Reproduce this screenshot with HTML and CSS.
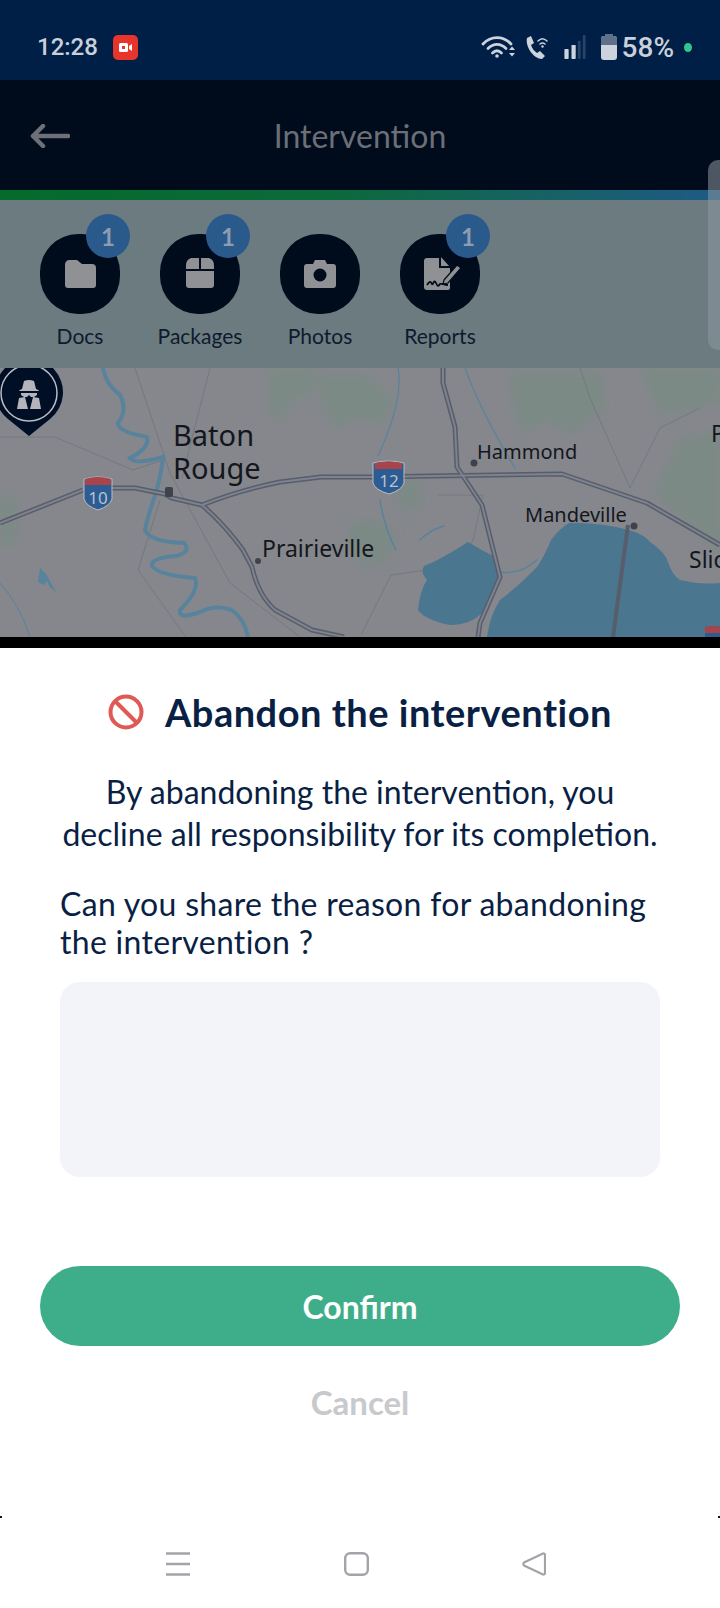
FILE: index.html
```html
<!DOCTYPE html>
<html lang="en">
  <head>
    <meta charset="UTF-8" />
    <meta name="viewport" content="width=device-width, initial-scale=1.0"/>
    <title>Intervention</title>
    <link rel="stylesheet" href="styles.css">
  </head>
  <body>
    <div class="status-bar">
      <span class="clock">12:28</span>
      <svg class="rec-icon" viewBox="0 0 25 25">
        <rect width="25" height="25" rx="5" fill="#e8352c"/>
        <rect x="6" y="8" width="9" height="9" rx="1.5" fill="#fff"/>
        <path d="M16 11l3-2v7l-3-2z" fill="#fff"/>
        <rect x="9" y="11" width="3" height="3" fill="#e8352c"/>
      </svg>
      <div class="status-right">
        <svg class="wifi-icon" viewBox="0 0 34 24" fill="none" stroke="#ccd3dd" stroke-width="2.8" stroke-linecap="round">
          <path d="M2 9c8-8.500 20-8.500 28 0"/>
          <path d="M7 13.500c5.500-5.500 12.500-5.500 18 0"/>
          <path d="M11.500 18c3-3 6-3 9 0"/>
          <circle cx="16" cy="21" r="1.800" fill="#ccd3dd" stroke="none"/>
          <path d="M28 15l3-3.500 3 3.500zM28 18l3 3.500 3-3.500z" fill="#ccd3dd" stroke="none"/>
        </svg>
        <svg class="call-icon" viewBox="0 0 24 24">
          <path d="M2 3l4-2 3 7-3 2c1 3 3 6 6 8l3-2 5 5-3 3C9 24 0 12 2 3z" fill="#ccd3dd"/>
          <path d="M13 6c3-3 6-3 9 0M15 9c2-1.500 3-1.500 5 0" fill="none" stroke="#ccd3dd" stroke-width="1.500" stroke-linecap="round"/>
          <circle cx="17.500" cy="11.500" r="1.200" fill="#ccd3dd"/>
        </svg>
        <svg class="signal-icon" viewBox="0 0 30 34">
          <rect x="0" y="20" width="6" height="14" rx="1" fill="#ccd3dd"/>
          <rect x="10" y="14" width="6" height="20" rx="1" fill="#ccd3dd"/>
          <rect x="19" y="8" width="4" height="26" rx="1" fill="#2a4263"/>
          <rect x="26" y="0" width="4" height="34" rx="1" fill="#2a4263"/>
        </svg>
        <svg class="battery-icon" viewBox="0 0 16 26">
          <rect x="4" y="0" width="8" height="3" fill="#5d7188"/>
          <rect x="0" y="2" width="16" height="24" rx="3" fill="#ccd3dd"/>
          <path d="M0 11V5a3 3 0 0 1 3-3h10a3 3 0 0 1 3 3v6z" fill="#5d7188"/>
        </svg>
        <span class="battery-text">58%</span>
        <span class="green-dot"></span>
      </div>
    </div>

    <header class="top-bar">
      <svg class="back-arrow" viewBox="0 0 40 24" fill="none" stroke="#6d7077" stroke-width="4.500" stroke-linecap="round" stroke-linejoin="round">
        <path d="M38 12H3M13 2L3 12l10 10"/>
      </svg>
      <h1>Intervention</h1>
    </header>
    <div class="progress-strip"></div>

    <div class="actions">
      <div class="action">
        <div class="round-btn">
          <svg viewBox="0 0 80 80"><path d="M25 31a5 5 0 0 1 4-5h8l5 4h10a4 4 0 0 1 4 4v17a3 3 0 0 1-3 3H28a3 3 0 0 1-3-3z" fill="#8f9194"/></svg>
          <span class="badge">1</span>
        </div>
        <span class="action-label">Docs</span>
      </div>
      <div class="action">
        <div class="round-btn">
          <svg viewBox="0 0 80 80"><path d="M26 37h28v14a3 3 0 0 1-3 3H29a3 3 0 0 1-3-3zM31 24h8v11H26v-3a8 8 0 0 1 5-8zM41 24h8a8 8 0 0 1 5 8v3H41z" fill="#8f9194"/></svg>
          <span class="badge">1</span>
        </div>
        <span class="action-label">Packages</span>
      </div>
      <div class="action">
        <div class="round-btn">
          <svg viewBox="0 0 80 80">
            <path d="M27 30h6l2-4h10l2 4h6a3 3 0 0 1 3 3v18a3 3 0 0 1-3 3H27a3 3 0 0 1-3-3V33a3 3 0 0 1 3-3z" fill="#8f9194"/>
            <circle cx="40" cy="41" r="6.500" fill="#000b1c"/>
          </svg>
        </div>
        <span class="action-label">Photos</span>
      </div>
      <div class="action">
        <div class="round-btn">
          <svg viewBox="0 0 80 80">
            <path d="M27 24h12v10h11v20a2 2 0 0 1-2 2H27a3 3 0 0 1-3-3V27a3 3 0 0 1 3-3z" fill="#8f9194"/>
            <path d="M41 23l8 9h-8z" fill="#8f9194"/>
            <path d="M27 51c3-5 4-3 5-1s2-6 4-1 3 2 4 1 4 1 8 1" fill="none" stroke="#000b1c" stroke-width="1.800"/>
            <path d="M44 46l13-15 4 3-13 15-5 1z" fill="#8f9194" stroke="#000b1c" stroke-width="1.200"/>
          </svg>
          <span class="badge">1</span>
        </div>
        <span class="action-label">Reports</span>
      </div>
    </div>

    <svg class="map" viewBox="0 368 720 269">
      <defs>
        <filter id="soft"><feGaussianBlur stdDeviation="4"/></filter>
      </defs>
      <rect x="0" y="368" width="720" height="269" fill="#85878c"/>
      <!-- land cover -->
      <g fill="#7b8a85" filter="url(#soft)">
        <path d="M270 368h50l-8 24-22 10-6 20-16-10z"/>
        <path d="M318 376h50l28 26-16 22-24-8-20 14-14-26z"/>
        <path d="M510 372h90l6 36-36 26-24-14-24 14-10-34z"/>
        <path d="M720 430l-40 10-26 50 36 36 30 26z"/>
        <path d="M640 368h80v34l-56 14-14-22z"/>
        <path d="M350 525l24-6 22 16-8 24-22 8-18-18z"/>
        <path d="M0 496h16v50H0z"/>
        <path d="M400 480l18 2 4 22-14 8-12-16z"/>
      </g>
      <!-- borders and small roads -->
      <g fill="none" stroke="#74787f" stroke-width="1">
        <path d="M0 437h55l78 33 30-10"/>
        <path d="M135 368l35 105 60 110 70 54"/>
        <path d="M210 368l-18 70-10 40"/>
        <path d="M160 500l-22 70 50 70"/>
        <path d="M438 495h45l-10 45-12 25-70 10-30 60"/>
        <path d="M580 368l10 30 40 90 30-60 40-20"/>
      </g>
      <!-- water -->
      <g fill="none" stroke="#58839c" stroke-linecap="round">
        <path stroke-width="4" d="M103 368Q106 385 120 395Q128 410 118 423Q118 432 147 437Q150 448 130 458Q135 465 163 457Q162 470 156 493Q148 515 145 530Q150 542 184 543Q192 552 176 556Q150 558 152 566Q158 575 195 578Q200 590 180 610Q178 620 200 612Q215 604 232 610Q245 620 248 637"/>
        <path stroke-width="1.200" d="M398 368Q404 400 378 456M465 368Q480 410 515 468"/>
        <path stroke-width="1.500" d="M380 500Q385 530 396 550M420 540Q430 530 444 526M500 572Q520 575 537 560"/>
        <path stroke-width="1" d="M0 583Q20 605 30 637"/>
      </g>
      <path d="M40 568l6 6 10 18-6-5-3-6-3 4-6-3z" fill="#58839c"/>
      <path d="M468 542Q490 555 496 557Q502 570 500 580Q490 600 482 613Q470 625 450 625Q425 620 418 610Q420 590 427 580Q420 572 424 566Q440 560 468 542z" fill="#4b7690"/>
      <path d="M569 523Q600 522 629 530Q645 535 650 542Q665 552 668 562Q672 575 680 580Q700 585 720 583V637H487Q490 615 500 600Q520 585 537 567Q545 555 551 540Q560 528 569 523z" fill="#4b7690"/>
      <!-- roads -->
      <g fill="none" stroke="#575d6b" stroke-width="5" stroke-linejoin="round">
        <path d="M0 523L83 490M112 488h23l30 6 7 4 30 7Q225 525 243 550L252 567Q258 595 275 610L312 630 344 637"/>
        <path d="M202 505Q240 490 280 482L321 477h51l190-3 85 29 73 42"/>
        <path d="M443 368v15l12 44 2 40 25 38 18 72-20 46-2 14"/>
        <path d="M628 525l-15 112" stroke-width="4"/>
      </g>
      <g fill="none" stroke="#7d828e" stroke-width="2" stroke-linejoin="round">
        <path d="M0 523L83 490M112 488h23l30 6 7 4 30 7Q225 525 243 550L252 567Q258 595 275 610L312 630 344 637"/>
        <path d="M202 505Q240 490 280 482L321 477h51l190-3 85 29 73 42"/>
        <path d="M443 368v15l12 44 2 40 25 38 18 72-20 46-2 14"/>
      </g>
      <!-- place dots -->
      <g fill="#3e424c">
        <rect x="165" y="487" width="8" height="10" rx="2"/>
        <circle cx="474" cy="463" r="3.500"/>
        <circle cx="634" cy="526" r="3.500"/>
        <circle cx="258" cy="561" r="3"/>
      </g>
      <!-- shields -->
      <g>
        <path d="M84 479q14-4 28 0v20q-2 7-14 11-12-4-14-11z" fill="#2d5c92" stroke="#b9bcc2"/>
        <path d="M85 485v-6q13-4 26 0v6z" fill="#a9444a"/>
        <text class="shield-text" x="98" y="504">10</text>
        <path d="M373 463q15-4 31 0v20q-2 7-15 11-14-4-16-11z" fill="#2d5c92" stroke="#b9bcc2"/>
        <path d="M375 469v-6q14-3 27 0v6z" fill="#a9444a"/>
        <text class="shield-text" x="389" y="487">12</text>
        <path d="M705 627q8-2 15 0v10h-15z" fill="#2d5c92"/>
        <path d="M705 633v-6q8-2 15 0v6z" fill="#a9444a"/>
      </g>
      <!-- labels -->
      <g class="map-labels">
        <text class="label-big" x="173" y="446">Baton</text>
        <text class="label-big" x="173" y="479">Rouge</text>
        <text class="label-small" x="477" y="459">Hammond</text>
        <text class="label-small" x="525" y="522">Mandeville</text>
        <text class="label-mid" x="262" y="557">Prairieville</text>
        <text class="label-mid" x="689" y="568">Slic</text>
        <text class="label-mid" x="711" y="442">P</text>
      </g>
      <!-- pin -->
      <path d="M29 436L8 419a34 34 0 1 1 42 0z" fill="#000f26"/>
      <circle cx="29" cy="393" r="28" fill="none" stroke="#b9bcc2" stroke-width="1.500"/>
      <g fill="#b3b5ba">
        <path d="M22 389l2-8q5-2 10 0l2 8q3 1 3 2H19q0-1 3-2z"/>
        <path d="M21 393h16v2l-3 2h-3l-2-2-2 2h-3l-3-2z"/>
        <path d="M17 409l2-11 6-1 3 12zM41 409l-2-11-6-1-3 12z"/>
      </g>
    </svg>
    <div class="black-bar"></div>

    <main class="sheet">
      <div class="sheet-title">
        <svg class="ban-icon" viewBox="0 0 36 36" fill="none" stroke="#df5a55" stroke-width="4">
          <circle cx="18" cy="18" r="15.500"/>
          <path d="M7 7l22 22"/>
        </svg>
        <h2>Abandon the intervention</h2>
      </div>
      <p class="warning">By abandoning the intervention, you<br>decline all responsibility for its completion.</p>
      <p class="question">Can you share the reason for abandoning the intervention ?</p>
      <div class="reason-box"></div>
      <div class="confirm-btn">Confirm</div>
      <div class="cancel-btn">Cancel</div>
    </main>

    <nav class="nav-bar">
      <svg class="nav-menu" viewBox="0 0 24 24"><path d="M0 1.500h24M0 12h24M0 22.500h24" stroke="#a2a4aa" stroke-width="2.600"/></svg>
      <svg class="nav-home" viewBox="0 0 25 24"><rect x="1.200" y="1.200" width="22.600" height="21.600" rx="5" fill="none" stroke="#a2a4aa" stroke-width="2.400"/></svg>
      <svg class="nav-back" viewBox="0 0 24 24"><path d="M21 1.500a1.500 1.500 0 0 1 2 1.300v18.400a1.500 1.500 0 0 1-2 1.300L2 13.500a2 2 0 0 1 0-3z" fill="none" stroke="#a2a4aa" stroke-width="2.200"/></svg>
    </nav>

    <div class="scroll-thumb"></div>
  </body>
</html>
```

FILE: styles.css
```css
* {
  box-sizing: border-box;
}

body {
  font-family: Lato, "Noto Sans", sans-serif;
  margin: 0;
  padding: 0;
  width: 720px;
  height: 1608px;
  overflow: hidden;
  position: relative;
  background-color: #fff;
  color: #0a1f44;
}

.status-bar {
  height: 80px;
  background-color: #001f47;
  display: flex;
  align-items: center;
  padding: 14px 0 0 37px;
}

.clock {
  color: #c9d0da;
  font-family: Roboto, sans-serif;
  font-size: 24px;
  font-weight: 500;
  width: 76px;
}

.rec-icon {
  width: 25px;
  height: 25px;
}

.status-right {
  margin-left: auto;
  display: flex;
  align-items: center;
  padding-right: 28px;
}

.wifi-icon {
  width: 34px;
  height: 24px;
}

.call-icon {
  width: 24px;
  height: 24px;
  margin-left: 10px;
}

.signal-icon {
  width: 30px;
  height: 24px;
  margin-left: 11px;
}

.battery-icon {
  width: 16px;
  height: 26px;
  margin-left: 11px;
}

.battery-text {
  color: #c9d0da;
  font-family: Roboto, sans-serif;
  font-size: 28px;
  font-weight: 500;
  margin-left: 5px;
}

.green-dot {
  width: 8px;
  height: 9px;
  border-radius: 50%;
  background-color: #35c48d;
  margin-left: 10px;
}

.top-bar {
  height: 110px;
  background-color: #000b1c;
  display: flex;
  align-items: center;
  justify-content: center;
  position: relative;
}

.top-bar h1 {
  margin: 0;
  color: #6b6f78;
  font-size: 32px;
  font-weight: 400;
}

.back-arrow {
  position: absolute;
  left: 30px;
  top: 44px;
  width: 40px;
  height: 24px;
}

.progress-strip {
  height: 10px;
  background: linear-gradient(90deg, #046b2c 0%, #0b6a3a 45%, #1f5a86 100%);
}

.actions {
  height: 168px;
  background-color: #6b7b80;
  display: flex;
  gap: 40px;
  padding: 34px 0 0 40px;
}

.action {
  width: 80px;
  display: flex;
  flex-direction: column;
  align-items: center;
}

.round-btn {
  width: 80px;
  height: 80px;
  border-radius: 38px;
  background-color: #000b1c;
  position: relative;
}

.round-btn svg {
  width: 80px;
  height: 80px;
  display: block;
}

.badge {
  position: absolute;
  left: 46px;
  top: -20px;
  width: 44px;
  height: 44px;
  border-radius: 50%;
  background-color: #2a5a8c;
  color: #8d9cb0;
  font-size: 24px;
  font-weight: 700;
  display: flex;
  align-items: center;
  justify-content: center;
}

.action-label {
  margin-top: 9px;
  white-space: nowrap;
  font-size: 21px;
  color: #0e1a2e;
}

.map {
  display: block;
  width: 720px;
  height: 269px;
}

.map-labels text {
  font-family: "Noto Sans", sans-serif;
  fill: #14161c;
}

.label-big {
  font-size: 29px;
}

.label-mid {
  font-size: 23px;
}

.label-small {
  font-size: 20px;
  fill: #23262d;
}

.shield-text {
  font-family: "Noto Sans", sans-serif;
  font-size: 17px;
  fill: #b6c2d2;
  text-anchor: middle;
}

.black-bar {
  height: 11px;
  background-color: #000;
}

.sheet {
  background-color: #fff;
  padding: 0 40px;
}

.sheet-title {
  display: flex;
  align-items: center;
  justify-content: center;
  padding-top: 46px;
}

.sheet-title h2 {
  margin: 0 0 0 21px;
  font-size: 38px;
  line-height: 36px;
  letter-spacing: 0.5px;
  font-weight: 700;
  color: #0a1f44;
}

.ban-icon {
  width: 36px;
  height: 36px;
}

.warning {
  margin: 41px 0 0;
  text-align: center;
  font-size: 32px;
  line-height: 42px;
}

.question {
  margin: 30px 0 0;
  padding: 0 20px;
  font-size: 32px;
  line-height: 38px;
  letter-spacing: 0.3px;
}

.reason-box {
  margin: 21px 20px 0;
  height: 195px;
  border-radius: 20px;
  background-color: #f3f4f9;
}

.confirm-btn {
  margin-top: 89px;
  height: 80px;
  border-radius: 40px;
  background-color: #3eae8a;
  color: #fff;
  font-size: 32px;
  font-weight: 700;
  display: flex;
  align-items: center;
  justify-content: center;
}

.cancel-btn {
  margin-top: 36px;
  text-align: center;
  color: #c8c9cc;
  font-size: 33px;
  font-weight: 700;
  line-height: 40px;
}

.nav-bar {
  position: absolute;
  left: 0;
  right: 0;
  bottom: 0;
  height: 90px;
}

/* tiny dark corners where the sheet meets the nav bar */
.nav-bar::before,
.nav-bar::after {
  content: "";
  position: absolute;
  top: -2px;
  width: 2px;
  height: 2px;
  background-color: #111;
}

.nav-bar::before {
  left: 0;
}

.nav-bar::after {
  right: 0;
}

.nav-menu,
.nav-home,
.nav-back {
  position: absolute;
  top: 34px;
  height: 24px;
}

.nav-menu {
  left: 166px;
  width: 24px;
}

.nav-home {
  left: 344px;
  width: 25px;
}

.nav-back {
  left: 522px;
  width: 24px;
}

.scroll-thumb {
  position: absolute;
  right: 0;
  top: 160px;
  width: 12px;
  height: 190px;
  border-radius: 10px 0 0 10px;
  background-color: rgba(140, 152, 158, 0.55);
}
```
